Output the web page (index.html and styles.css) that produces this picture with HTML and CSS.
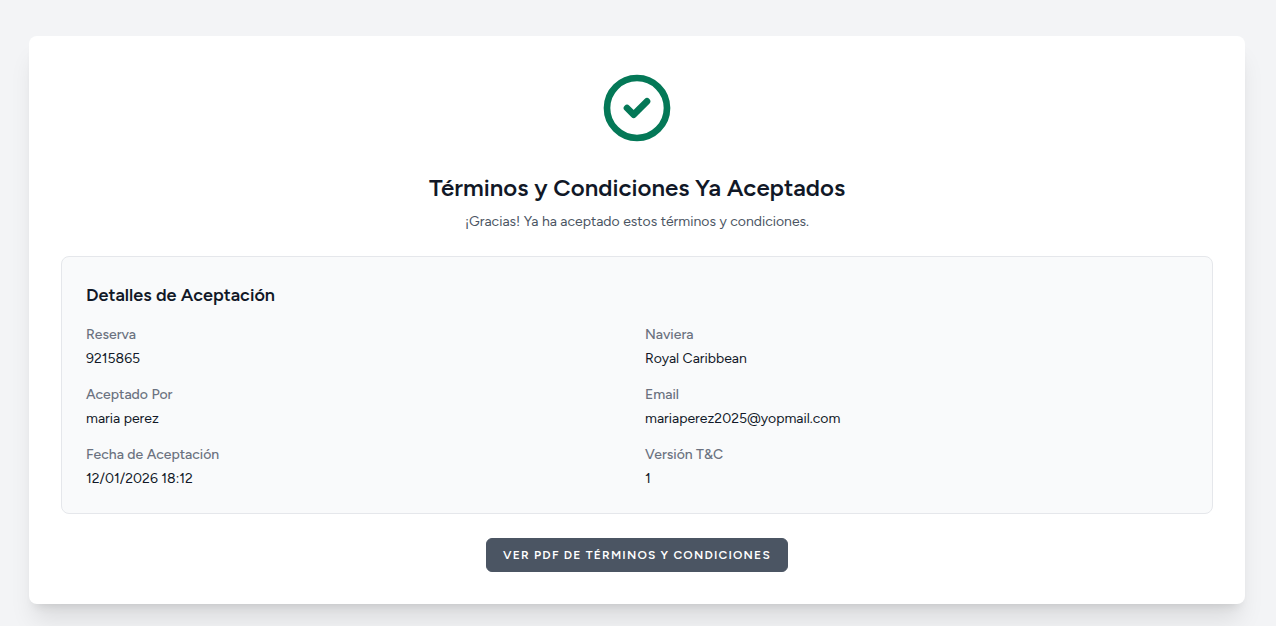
FILE: index.html
```html
<!DOCTYPE html>
<html lang="es">
<head>
    <meta charset="UTF-8">
    <meta name="viewport" content="width=device-width, initial-scale=1.0">
    <title>Términos y Condiciones</title>
    <link rel="stylesheet" href="styles.css">
</head>
<body>
    <main class="page">
        <div class="card">
            <svg class="check-icon" viewBox="0 0 24 24" fill="none" stroke="currentColor" aria-hidden="true">
                <path stroke-linecap="round" stroke-linejoin="round" stroke-width="2" d="M9 12l2 2 4-4m6 2a9 9 0 11-18 0 9 9 0 0118 0z"/>
            </svg>
            <h1>Términos y Condiciones Ya Aceptados</h1>
            <p class="subtitle">¡Gracias! Ya ha aceptado estos términos y condiciones.</p>

            <!-- Detalles -->
            <section class="details">
                <h2>Detalles de Aceptación</h2>
                <dl class="details-grid">
                    <div>
                        <dt>Reserva</dt>
                        <dd>9215865</dd>
                    </div>
                    <div>
                        <dt>Naviera</dt>
                        <dd>Royal Caribbean</dd>
                    </div>
                    <div>
                        <dt>Aceptado Por</dt>
                        <dd>maria perez</dd>
                    </div>
                    <div>
                        <dt>Email</dt>
                        <dd>mariaperez2025@yopmail.com</dd>
                    </div>
                    <div>
                        <dt>Fecha de Aceptación</dt>
                        <dd>12/01/2026 18:12</dd>
                    </div>
                    <div>
                        <dt>Versión T&amp;C</dt>
                        <dd>1</dd>
                    </div>
                </dl>
            </section>

            <a class="pdf-button" href="#">Ver PDF de Términos y Condiciones</a>
        </div>
    </main>
</body>
</html>
```
FILE: styles.css
```css
* {
    box-sizing: border-box;
}
body {
    margin: 0;
    background-color: #f3f4f6;
    font-family: Figtree, Roboto, sans-serif;
    color: #111827;
}
h1, h2, p, dl, dd {
    margin: 0;
}
.page {
    min-height: 100vh;
    padding: 36px 31px 22px 29px;
}
.card {
    display: flex;
    flex-direction: column;
    align-items: center;
    padding: 32px;
    background: #ffffff;
    border-radius: 8px;
    box-shadow: 0 20px 25px -5px rgba(0, 0, 0, 0.1), 0 8px 10px -6px rgba(0, 0, 0, 0.1);
}
.check-icon {
    width: 80px;
    height: 80px;
    color: #047857;
}
h1 {
    margin-top: 24px;
    font-size: 24px;
    line-height: 32px;
    font-weight: 600;
    text-align: center;
}
.subtitle {
    margin-top: 8px;
    font-size: 14px;
    line-height: 20px;
    color: #4b5563;
    text-align: center;
}

/* Panel de detalles */
.details {
    width: 100%;
    margin-top: 24px;
    padding: 24px;
    background: #f9fafb;
    border: 1px solid #e5e7eb;
    border-radius: 8px;
}
h2 {
    margin-bottom: 16px;
    font-size: 18px;
    line-height: 28px;
    font-weight: 600;
}
.details-grid {
    display: grid;
    grid-template-columns: 1fr 1fr;
    gap: 16px;
    font-size: 14px;
    line-height: 20px;
}
dt {
    font-weight: 500;
    color: #6b7280;
}
dd {
    margin-top: 4px;
}

.pdf-button {
    margin-top: 24px;
    padding: 8px 16px;
    background-color: #4b5563;
    border: 1px solid #4b5563;
    border-radius: 6px;
    color: #ffffff;
    font-size: 12px;
    line-height: 16px;
    font-weight: 600;
    letter-spacing: 0.1em;
    text-align: center;
    text-decoration: none;
    text-transform: uppercase;
}
.pdf-button:hover {
    background-color: #374151;
}
```
